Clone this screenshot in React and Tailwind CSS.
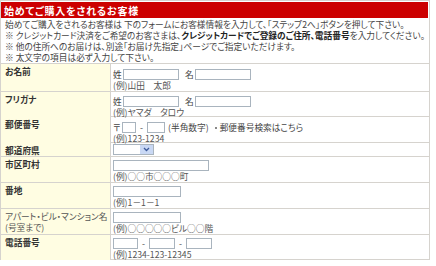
import React from "react";

const Box = ({ w }) => (
  <span
    className="inline-block h-[11px] border border-[#a9b4be] bg-white shrink-0"
    style={{ width: w }}
  />
);

const Example = ({ children }) => (
  <div className="leading-[11px] text-[#555] whitespace-nowrap">{children}</div>
);

const Row = ({ h, label, labelBold = true, children, pt = "pt-[3px]" }) => (
  <div
    className="grid grid-cols-[110px_1fr] border-b border-[#d6d3ce]"
    style={{ height: h }}
  >
    <div
      className={`bg-[#fffde2] border-r border-[#d6d3ce] pl-[4px] pt-[2px] leading-[11px] ${
        labelBold ? "font-bold text-[#333]" : "text-[#555]"
      }`}
    >
      {label}
    </div>
    <div className={`pl-[2px] ${pt}`}>{children}</div>
  </div>
);

export default function App() {
  return (
    <div className="w-[436px] h-[266px] bg-white overflow-hidden font-['Noto_Sans_CJK_JP','Noto_Sans',sans-serif] text-[8.7px] [font-feature-settings:'palt'] text-[#444]">
      <div className="w-[430px] border-t border-l border-r border-[#d6d3ce] pt-[1px]">
        <div className="h-[16px] mr-[1px] bg-[#cc0000] text-white font-bold text-[10px] tracking-[0.8px] pl-[3px] flex items-center leading-[11px]">
          始めてご購入をされるお客様
        </div>
        <div className="border-b border-[#d6d3ce] pl-[4px] pt-[1px] leading-[11px] whitespace-nowrap">
          <div>始めてご購入をされるお客様は 下のフォームにお客様情報を入力して、「ステップ2へ」ボタンを押して下さい。</div>
          <div>
            ※ クレジットカード決済をご希望のお客さまは、
            <span className="font-bold text-[#222]">クレジットカードでご登録のご住所、電話番号</span>
            を入力してください。
          </div>
          <div>※ 他の住所へのお届けは、別途「お届け先指定」ページでご指定いただけます。</div>
          <div>※ 太文字の項目は必ず入力して下さい。</div>
        </div>

        <Row h={28} label="お名前" pt="pt-[5px]">
          <div className="flex items-center h-[11px] leading-[11px]">
            <span className="w-[10px]">姓</span>
            <Box w={56} />
            <span className="ml-[6px] w-[10px]">名</span>
            <Box w={56} />
          </div>
          <Example>(例)山田　太郎</Example>
        </Row>

        <Row h={25} label="フリガナ" pt="pt-[4px]">
          <div className="flex items-center h-[11px] leading-[11px]">
            <span className="w-[10px]">姓</span>
            <Box w={56} />
            <span className="ml-[6px] w-[10px]">名</span>
            <Box w={56} />
          </div>
          <Example>(例)ヤマダ　タロウ</Example>
        </Row>

        <Row h={26} label="郵便番号" pt="pt-[5px]">
          <div className="flex items-center h-[11px] leading-[11px] whitespace-nowrap">
            <span className="w-[9px]">〒</span>
            <Box w={14} />
            <span className="mx-[4px]">-</span>
            <Box w={18} />
            <span className="ml-[3px]">(半角数字)</span>
            <span className="ml-[6px] mr-[3px] inline-block w-[2px] h-[2px] bg-[#888]" />
            <span>郵便番号検索はこちら</span>
          </div>
          <Example>(例)123-1234</Example>
        </Row>

        <Row h={14} label="都道府県" pt="pt-[1px]">
          <div className="flex h-[11px] w-[41px] border border-[#a9b4be] bg-white">
            <div className="flex-1" />
            <div className="w-[13px] bg-[#c9d8f4] flex items-center justify-center">
              <svg width="7" height="5" viewBox="0 0 7 5">
                <path d="M1 1 L3.5 3.5 L6 1" fill="none" stroke="#3c5a9a" strokeWidth="1.3" />
              </svg>
            </div>
          </div>
        </Row>

        <Row h={26} label="市区町村" pt="pt-[3px]">
          <div className="flex h-[11px]">
            <Box w={96} />
          </div>
          <Example>(例)○○市○○○町</Example>
        </Row>

        <Row h={26} label="番地" pt="pt-[3px]">
          <div className="flex h-[11px]">
            <Box w={68} />
          </div>
          <Example>(例)1－1－1</Example>
        </Row>

        <Row
          h={26}
          labelBold={false}
          label={
            <>
              <div className="whitespace-nowrap">アパート・ビル・マンション名</div>
              <div>(号室まで)</div>
            </>
          }
          pt="pt-[3px]"
        >
          <div className="flex h-[11px]">
            <Box w={68} />
          </div>
          <Example>(例)○○○○○ビル○○階</Example>
        </Row>

        <Row h={25} label="電話番号" pt="pt-[3px]">
          <div className="flex items-center h-[11px] leading-[11px]">
            <Box w={25} />
            <span className="mx-[4px]">-</span>
            <Box w={26} />
            <span className="mx-[4px]">-</span>
            <Box w={26} />
          </div>
          <Example>(例)1234-123-12345</Example>
        </Row>
      </div>
    </div>
  );
}
